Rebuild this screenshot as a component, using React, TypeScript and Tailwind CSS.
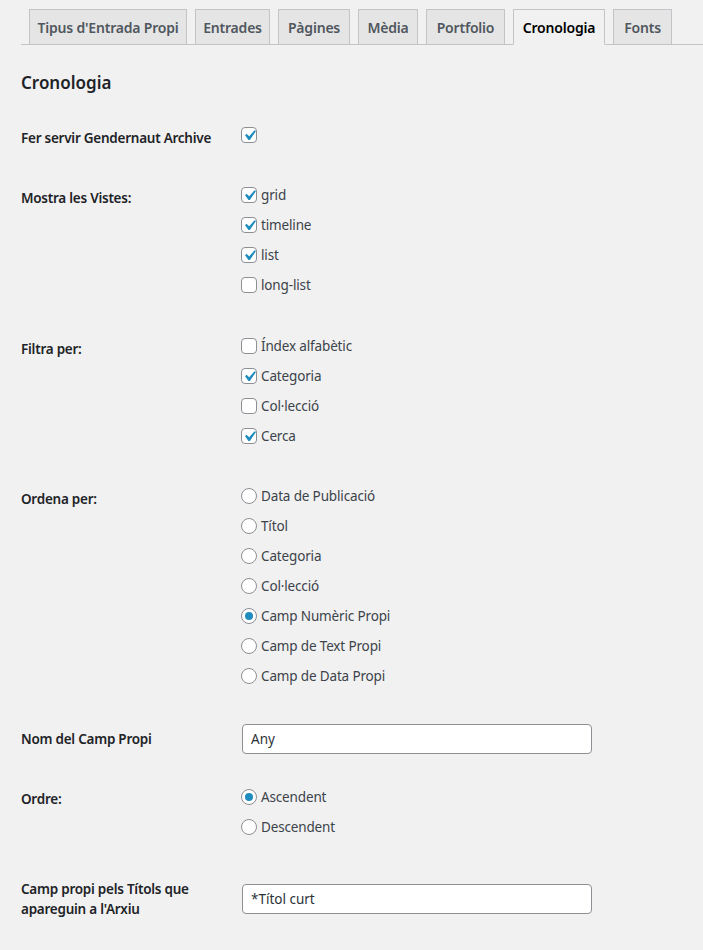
import React from "react";

const tabs: [string, number][] = [
    ["Tipus d'Entrada Propi", 158],
    ["Entrades", 75],
    ["Pàgines", 72],
    ["Mèdia", 60],
    ["Portfolio", 79],
    ["Cronologia", 92],
    ["Fonts", 59],
];

function Checkbox({ checked }: { checked?: boolean }) {
    return (
        <span className="w-4 h-4 rounded-[4px] border border-[#8c8f94] bg-white flex items-center justify-center shrink-0 overflow-visible">
            {checked && (
                <svg viewBox="0 0 20 20" className="w-[21px] h-[21px] shrink-0 -m-[3px]">
                    <path d="M14.83 4.89l1.34.94-5.81 8.38H9.02L5.78 9.67l1.34-1.25 2.57 2.4z" fill="#1e8cbe" />
                </svg>
            )}
        </span>
    );
}

function Radio({ checked }: { checked?: boolean }) {
    return (
        <span className="w-4 h-4 rounded-full border border-[#8c8f94] bg-white flex items-center justify-center shrink-0">
            {checked && <span className="w-2 h-2 rounded-full bg-[#1e8cbe]" />}
        </span>
    );
}

function Option({ label, checked, radio }: { label: string; checked?: boolean; radio?: boolean }) {
    return (
        <div className="h-[30px] flex items-center gap-1 text-[#3c434a] text-[13.5px] tracking-[-0.15px]">
            {radio ? <Radio checked={checked} /> : <Checkbox checked={checked} />}
            <span>{label}</span>
        </div>
    );
}

const label = "w-[220px] shrink-0 leading-5 font-semibold text-[13.5px] tracking-[-0.25px]";

export default function App() {
    return (
        <div className="min-h-[950px] bg-[#f1f1f1] text-[14px] text-[#1d2327] pl-[21px] pt-[9px]" style={{ fontFamily: "'Noto Sans', sans-serif" }}>
            {/* Tabs */}
            <div className="flex border-b border-[#c3c4c7] pl-2 gap-2">
                {tabs.map(([t, w]) => (
                    <div
                        key={t}
                        style={{ width: w }}
                        className={
                            t === "Cronologia"
                                ? "h-[36px] -mb-px shrink-0 whitespace-nowrap flex items-center justify-center text-[14px] tracking-[-0.2px] font-semibold border border-[#c3c4c7] border-b-[#f1f1f1] bg-[#f1f1f1] text-black"
                                : "h-[35px] shrink-0 whitespace-nowrap flex items-center justify-center text-[14px] tracking-[-0.2px] font-semibold border border-b-0 border-[#c3c4c7] bg-[#e5e5e5] text-[#50575e]"
                        }
                    >
                        {t}
                    </div>
                ))}
            </div>

            {/* Heading */}
            <h2 className="text-[17px] font-semibold mt-[26px] leading-6">Cronologia</h2>

            <div className="mt-[25px] flex flex-col">
                {/* Fer servir */}
                <div className="flex">
                    <div className={`${label} pt-2`}>Fer servir Gendernaut Archive</div>
                    <div className="h-[30px] flex items-center">
                        <Checkbox checked />
                    </div>
                </div>

                {/* Vistes */}
                <div className="flex mt-[30px]">
                    <div className={`${label} pt-2`}>Mostra les Vistes:</div>
                    <div>
                        <Option label="grid" checked />
                        <Option label="timeline" checked />
                        <Option label="list" checked />
                        <Option label="long-list" />
                    </div>
                </div>

                {/* Filtra */}
                <div className="flex mt-[31px]">
                    <div className={`${label} pt-2`}>Filtra per:</div>
                    <div>
                        <Option label="Índex alfabètic" />
                        <Option label="Categoria" checked />
                        <Option label="Col·lecció" />
                        <Option label="Cerca" checked />
                    </div>
                </div>

                {/* Ordena */}
                <div className="flex mt-[30px]">
                    <div className={`${label} pt-2`}>Ordena per:</div>
                    <div>
                        <Option radio label="Data de Publicació" />
                        <Option radio label="Títol" />
                        <Option radio label="Categoria" />
                        <Option radio label="Col·lecció" />
                        <Option radio label="Camp Numèric Propi" checked />
                        <Option radio label="Camp de Text Propi" />
                        <Option radio label="Camp de Data Propi" />
                    </div>
                </div>

                {/* Nom del camp */}
                <div className="flex mt-[33px]">
                    <div className={`${label} pt-[5px]`}>Nom del Camp Propi</div>
                    <div className="w-[350px] h-[30px] ml-px border border-[#8c8f94] rounded-[4px] bg-white px-2 flex items-center text-[#2c3338] text-[13.5px]">
                        Any
                    </div>
                </div>

                {/* Ordre */}
                <div className="flex mt-[28px]">
                    <div className={`${label} pt-[7px]`}>Ordre:</div>
                    <div>
                        <Option radio label="Ascendent" checked />
                        <Option radio label="Descendent" />
                    </div>
                </div>

                {/* Camp propi */}
                <div className="flex mt-[37px]">
                    <div className={`${label} pr-[20px]`}>Camp propi pels Títols que apareguin a l'Arxiu</div>
                    <div className="mt-[5px] w-[350px] h-[30px] ml-px border border-[#8c8f94] rounded-[4px] bg-white px-2 flex items-center text-[#2c3338] text-[13.5px]">
                        *Títol curt
                    </div>
                </div>
            </div>
        </div>
    );
}
